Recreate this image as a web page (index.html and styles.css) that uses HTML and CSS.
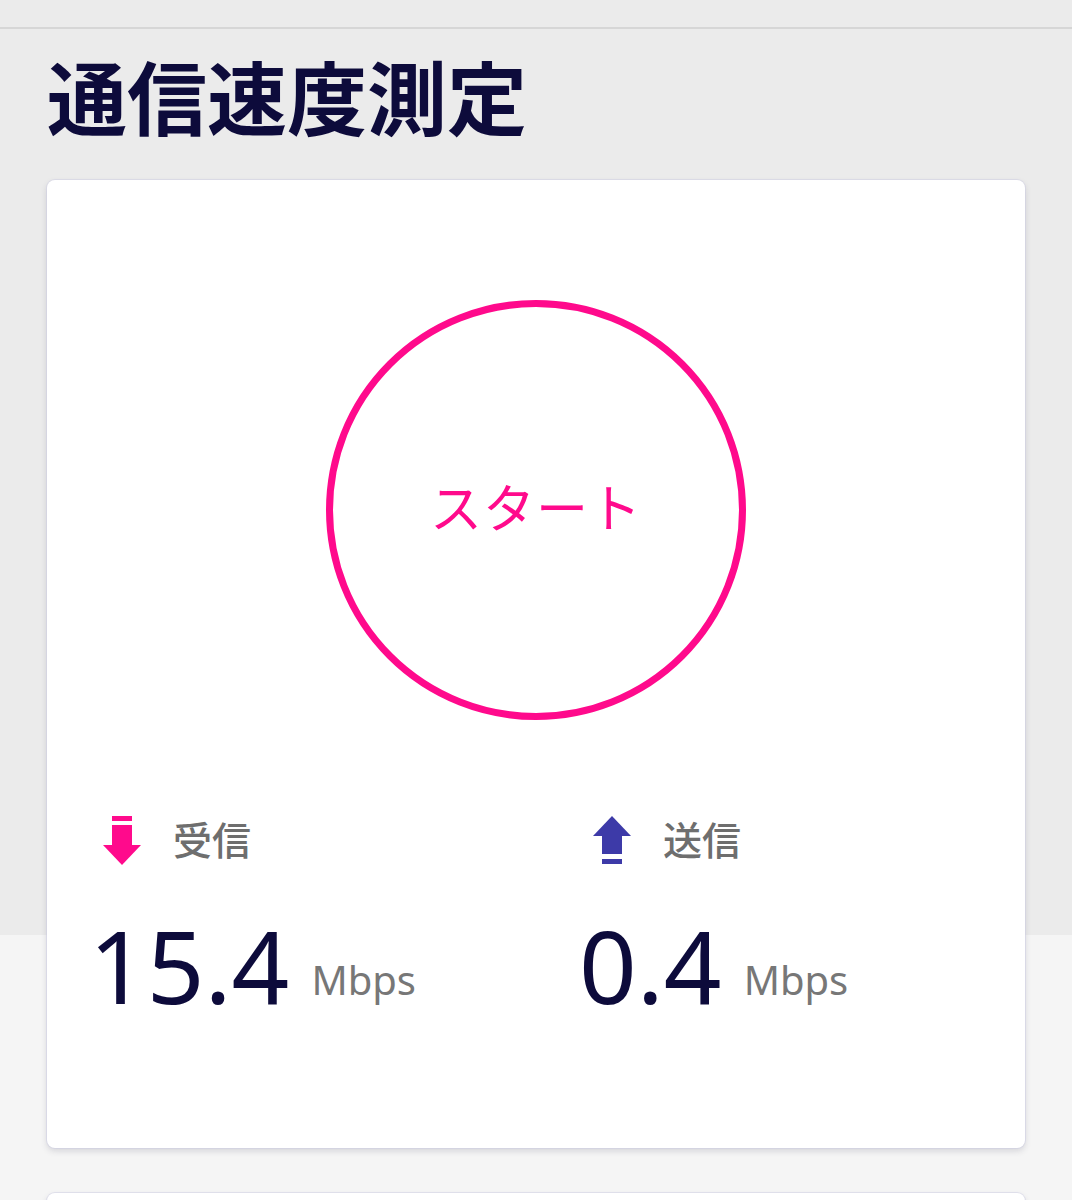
FILE: index.html
```html
<!DOCTYPE html>
<html lang="ja">
<head>
  <meta charset="UTF-8">
  <title>通信速度測定</title>
  <meta name="viewport" content="width=device-width, initial-scale=1.0">
  <link rel="stylesheet" href="styles.css">
</head>
<body>
  <div class="topbar"></div>
  <main class="page">
    <h1 class="title">通信速度測定</h1>
    <section class="card">
      <div class="start-wrap">
        <button class="start-btn" type="button">スタート</button>
      </div>
      <div class="stats">
        <div class="stat">
          <div class="stat-label">
            <svg class="stat-icon" viewBox="0 0 38 49" width="38" height="49">
              <rect x="9" y="0" width="20" height="5" fill="#ff0a8c"/>
              <rect x="9" y="9" width="20" height="21" fill="#ff0a8c"/>
              <polygon points="0,29 38,29 19,49" fill="#ff0a8c"/>
            </svg>
            <span>受信</span>
          </div>
          <div class="stat-value"><span class="num">15.4</span><span class="unit">Mbps</span></div>
        </div>
        <div class="stat">
          <div class="stat-label">
            <svg class="stat-icon" viewBox="0 0 38 49" width="38" height="49">
              <polygon points="19,0 38,20 0,20" fill="#3d3aa8"/>
              <rect x="9" y="19" width="20" height="19" fill="#3d3aa8"/>
              <rect x="9" y="43" width="20" height="5" fill="#3d3aa8"/>
            </svg>
            <span>送信</span>
          </div>
          <div class="stat-value"><span class="num">0.4</span><span class="unit">Mbps</span></div>
        </div>
      </div>
    </section>
    <section class="card card-next"></section>
  </main>
</body>
</html>
```

FILE: styles.css
```css
body {
  margin: 0;
  background: linear-gradient(#ebebeb 0, #ebebeb 935px, #f5f5f5 935px, #f5f5f5 100%);
  min-height: 100vh;
  font-family: "Noto Sans", "Noto Sans CJK JP", sans-serif;
  color: #0d0b3b;
  overflow: hidden;
}
.topbar {
  height: 27px;
  border-bottom: 2px solid #d6d6d6;
}
.page {
  padding: 0 47px;
}
.title {
  margin: 17px 0 38px 0;
  font-family: "Noto Sans CJK JP", sans-serif;
  font-size: 80px;
  font-weight: 700;
  line-height: 96px;
  color: #0d0b3b;
}
.card {
  background: #fff;
  border-radius: 8px;
  box-shadow: 0 0 0 1px rgba(205, 205, 228, 0.5), 0 3px 6px rgba(60, 60, 90, 0.18);
  height: 968px;
  box-sizing: border-box;
  padding: 120px 48px 0 48px;
}
.card-next {
  margin-top: 45px;
  height: 100px;
  padding: 0;
}
.start-wrap {
  display: flex;
  justify-content: center;
}
.start-btn {
  width: 420px;
  height: 420px;
  border: 7px solid #ff0a8c;
  border-radius: 50%;
  background: #fff;
  color: #ff0a8c;
  font-family: "Noto Sans CJK JP", sans-serif;
  font-size: 52px;
  font-weight: 400;
  letter-spacing: 1px;
  padding: 0 0 10px 0;
  cursor: pointer;
}
.stats {
  display: grid;
  grid-template-columns: 490px 1fr;
  margin-top: 95px;
}
.stat-label {
  display: flex;
  align-items: center;
  gap: 32px;
  padding-left: 8px;
  height: 50px;
  font-family: "Noto Sans CJK JP", sans-serif;
  font-size: 39px;
  font-weight: 500;
  color: #6e6e6e;
}
.stat-label span {
  margin-top: -4px;
}
.stat-icon {
  display: block;
}
.stat-value {
  margin: 50px 0 0 -6px;
  line-height: 1;
  white-space: nowrap;
}
.num {
  font-family: "Noto Sans", sans-serif;
  font-size: 101px;
  font-weight: 400;
  color: #0d0b3b;
}
.unit {
  margin-left: 22px;
  font-family: "Noto Sans", sans-serif;
  font-size: 40px;
  color: #777;
  vertical-align: 9px;
}
```
